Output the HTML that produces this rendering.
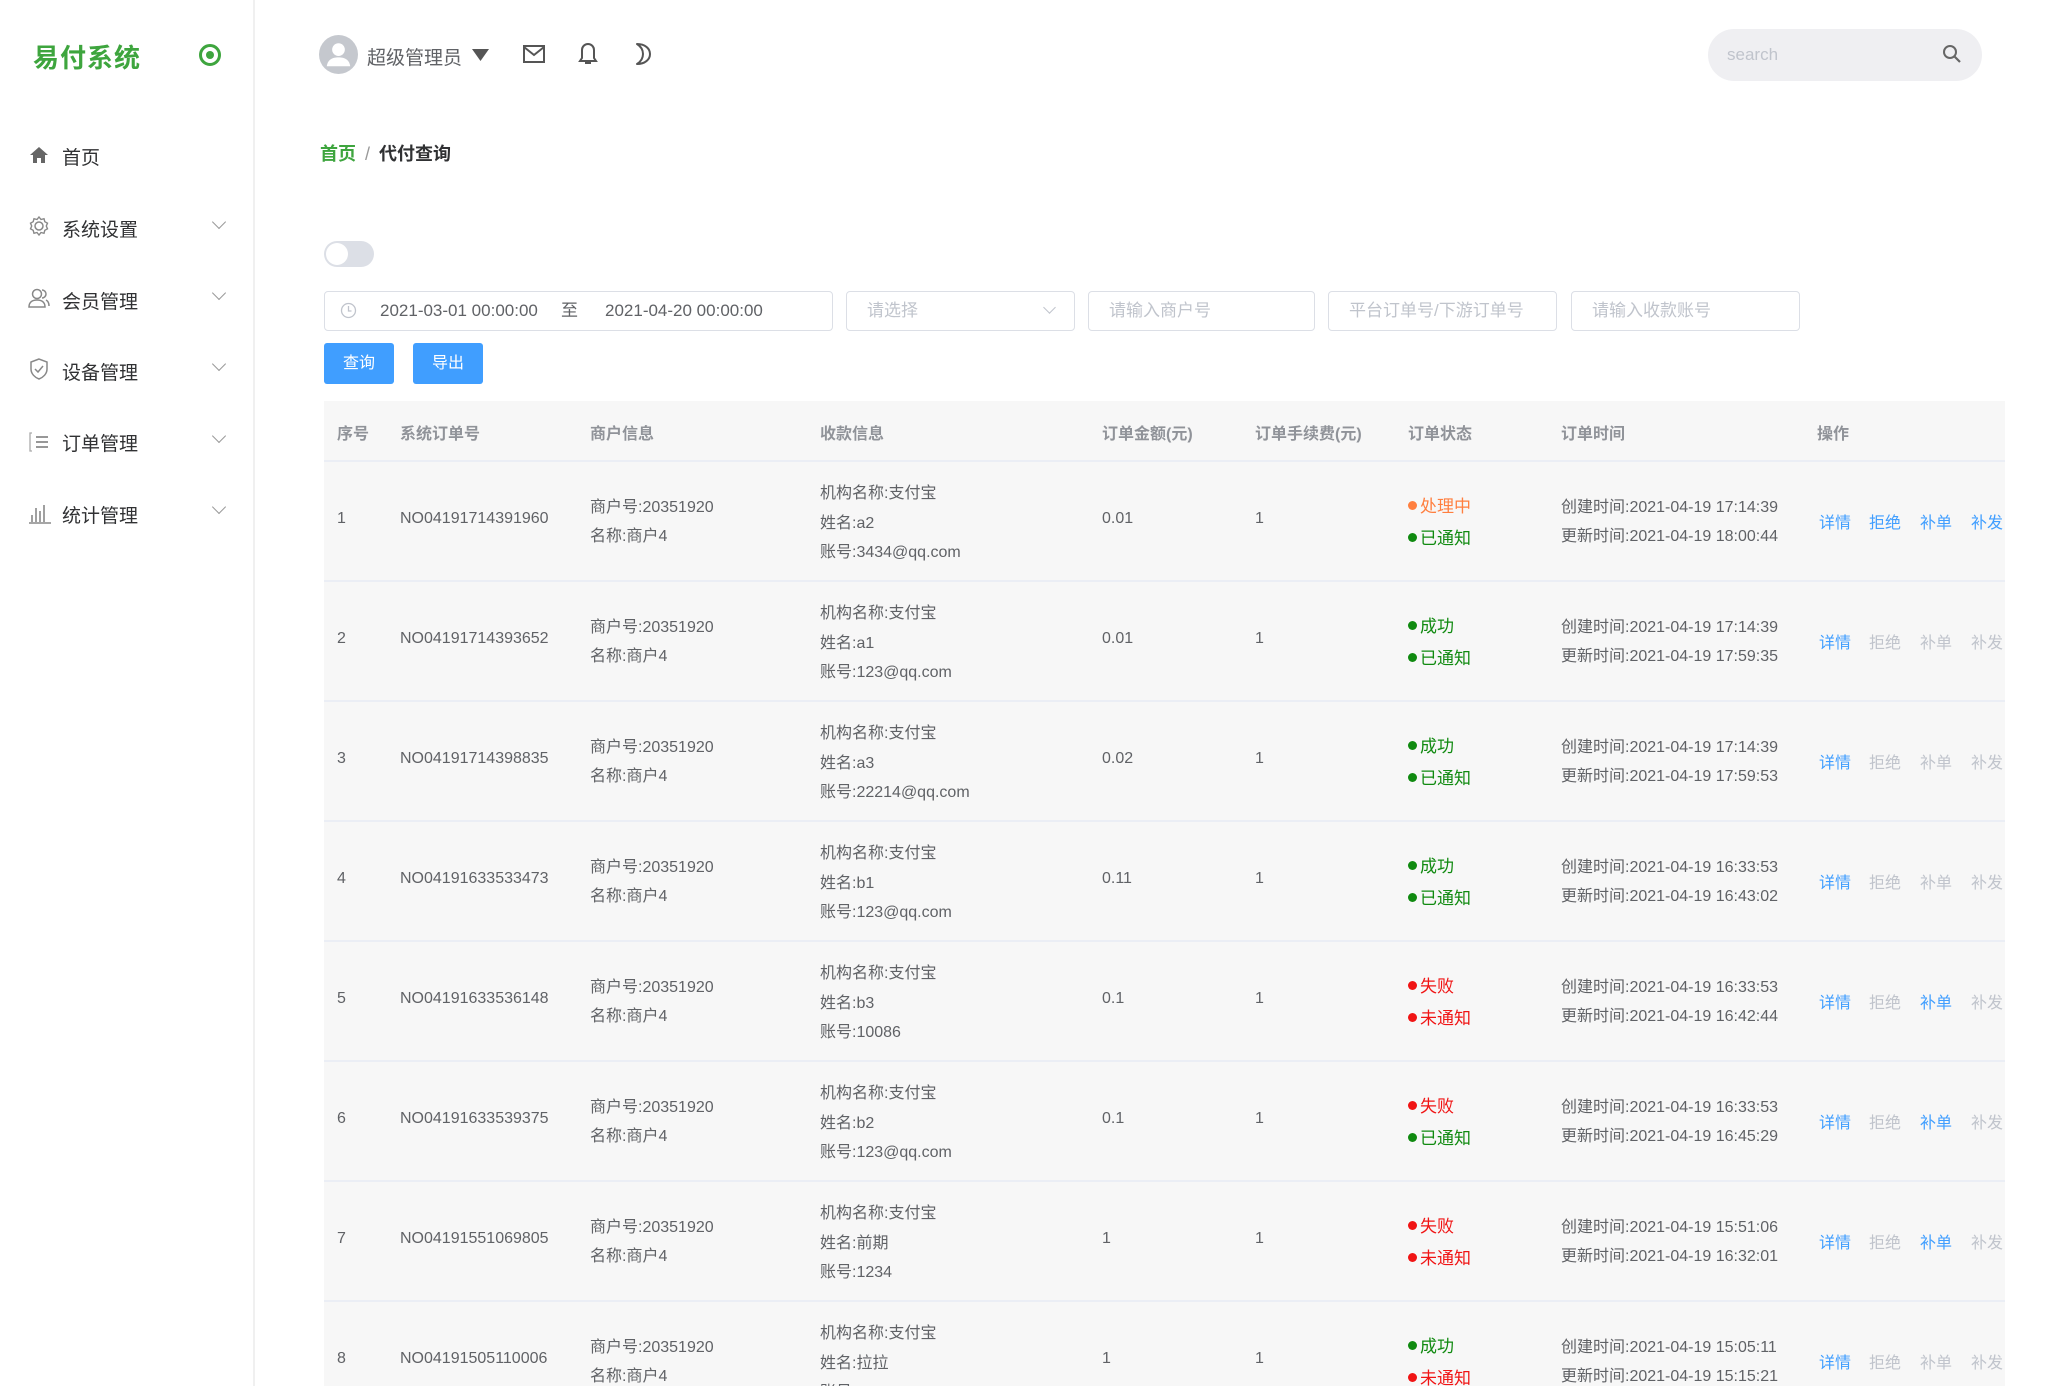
<!DOCTYPE html>
<html><head><meta charset="utf-8"><style>
*{margin:0;padding:0;box-sizing:border-box}
html,body{width:2048px;height:1386px;overflow:hidden}
body{background:#fff;font-family:"Liberation Sans","Noto Sans CJK SC",sans-serif;color:#606266;position:relative}
#wrap{position:absolute;left:0;top:0;width:2048px;height:1386px;overflow:hidden}
.a{position:absolute;white-space:nowrap}
.side{position:absolute;left:0;top:0;width:255px;height:1386px;border-right:2px solid #f0f0f0;background:#fff}
.logo{left:33px;top:38px;font-size:26px;font-weight:bold;color:#3ea53e;letter-spacing:1px}
.mi{left:62px;font-size:19px;color:#303133}
.chev{left:214px;width:10px;height:10px;border-right:1.5px solid #999;border-bottom:1.5px solid #999;transform:rotate(45deg)}
.inp{position:absolute;top:291px;height:40px;border:1.5px solid #dcdfe6;border-radius:4px;font-size:17px;color:#c0c4cc;padding-left:20px;line-height:37px}
.btn{position:absolute;top:343px;height:41px;background:#409eff;color:#fff;font-size:16px;border-radius:3px;text-align:center;line-height:41px}
.table{position:absolute;left:324px;top:401px;width:1681px;height:985px;background:#f7f7f7}
.th{position:absolute;top:420px;font-size:16px;font-weight:bold;color:#909399}
.row{position:absolute;left:324px;width:1681px;height:120px;border-top:2px solid #ebeef5}
.c{position:absolute;font-size:16px;color:#606266;white-space:nowrap;margin-top:-3px}
.s{font-size:17px}
.dot{display:inline-block;width:9px;height:9px;border-radius:50%;margin-right:3px;vertical-align:2px}
.o{color:#ff7f3f}.o .dot{background:#ff7f3f}
.g{color:#108a10}.g .dot{background:#108a10}
.r{color:#f01414}.r .dot{background:#f01414}
.lk{position:absolute;font-size:16px;color:#c0c4cc;margin-top:-4px}
.b{color:#409eff}
</style></head><body><div id="wrap">
<div class="side">
<div class="a logo">易付系统</div>
<svg class="a" style="left:198px;top:43px" width="24" height="24" viewBox="0 0 24 24"><circle cx="12" cy="12" r="9.5" fill="none" stroke="#3ea53e" stroke-width="3"/><circle cx="12" cy="12" r="4" fill="#3ea53e"/></svg>
<svg class="a" style="left:29px;top:145px" width="20" height="20" viewBox="0 0 20 20"><path d="M10 2L1 10h3v8h4v-5h4v5h4v-8h3z" fill="#666"/></svg>
<div class="a mi" style="top:143px">首页</div>
<svg class="a" style="left:28px;top:215px" width="22" height="22" viewBox="0 0 22 22"><circle cx="11" cy="11" r="4" fill="none" stroke="#888" stroke-width="1.5"/><path d="M11 2l2 2.5 3-.8.8 3 2.7 1.5-1.2 2.8 1.2 2.8-2.7 1.5-.8 3-3-.8L11 20l-2-2.5-3 .8-.8-3L2.5 13.8 3.7 11 2.5 8.2l2.7-1.5.8-3 3 .8z" fill="none" stroke="#888" stroke-width="1.4"/></svg>
<div class="a mi" style="top:215px">系统设置</div><div class="a chev" style="top:217px"></div>
<svg class="a" style="left:27px;top:287px" width="24" height="22" viewBox="0 0 24 22"><circle cx="10" cy="7" r="4.5" fill="none" stroke="#888" stroke-width="1.5"/><path d="M2 20c0-5 3.5-7 8-7s8 2 8 7z" fill="none" stroke="#888" stroke-width="1.5"/><path d="M15 3a4 4 0 010 8M19 13c2 1 3 3 3 6" fill="none" stroke="#888" stroke-width="1.5"/></svg>
<div class="a mi" style="top:287px">会员管理</div><div class="a chev" style="top:288px"></div>
<svg class="a" style="left:29px;top:358px" width="20" height="22" viewBox="0 0 20 22"><path d="M10 1L2 4v7c0 5 4 8.5 8 10 4-1.5 8-5 8-10V4z" fill="none" stroke="#888" stroke-width="1.5"/><path d="M6 11l3 3 5-6" fill="none" stroke="#888" stroke-width="1.5"/></svg>
<div class="a mi" style="top:358px">设备管理</div><div class="a chev" style="top:359px"></div>
<svg class="a" style="left:29px;top:432px" width="22" height="20" viewBox="0 0 22 20"><path d="M3 1H1v18h2" fill="none" stroke="#aaa" stroke-width="1.3"/><path d="M7 5h12M7 10h12M7 15h12" stroke="#777" stroke-width="1.6"/></svg>
<div class="a mi" style="top:429px">订单管理</div><div class="a chev" style="top:431px"></div>
<svg class="a" style="left:28px;top:502px" width="24" height="22" viewBox="0 0 24 22"><path d="M1 21h22M4 20v-7M8 20V6M12 20V9M16 20V3" stroke="#888" stroke-width="1.6"/></svg>
<div class="a mi" style="top:501px">统计管理</div><div class="a chev" style="top:502px"></div>
</div>

<svg class="a" style="left:319px;top:35px" width="39" height="39" viewBox="0 0 40 40"><circle cx="20" cy="20" r="20" fill="#c5c8ce"/><circle cx="20" cy="15" r="6.5" fill="#fff"/><path d="M8 32c1-7 6-9 12-9s11 2 12 9z" fill="#fff"/></svg>
<div class="a" style="left:367px;top:43px;font-size:19px;color:#606266">超级管理员</div>
<svg class="a" style="left:472px;top:49px" width="17" height="12"><path d="M0 0h17L8.5 12z" fill="#555"/></svg>
<svg class="a" style="left:523px;top:45px" width="22" height="18" viewBox="0 0 22 18"><rect x="1" y="1" width="20" height="16" fill="none" stroke="#555" stroke-width="2"/><path d="M1 2l10 8 10-8" fill="none" stroke="#555" stroke-width="2"/></svg>
<svg class="a" style="left:578px;top:42px" width="20" height="24" viewBox="0 0 20 24"><path d="M10 2a6 6 0 00-6 6v8l-2 3h16l-2-3V8a6 6 0 00-6-6z" fill="none" stroke="#555" stroke-width="2"/><path d="M7 21h6" stroke="#555" stroke-width="2"/></svg>
<svg class="a" style="left:634px;top:42px" width="20" height="24" viewBox="0 0 20 24"><path d="M3 2c8 0 13 4.5 13 10s-5 10-13 10c4-2.5 6-6 6-10S7 4.5 3 2z" fill="none" stroke="#555" stroke-width="2" stroke-linejoin="round"/></svg>
<div class="a" style="left:1708px;top:29px;width:274px;height:52px;border-radius:26px;background:#efeff2"></div>
<div class="a" style="left:1727px;top:45px;font-size:17px;color:#c0c4cc">search</div>
<svg class="a" style="left:1942px;top:44px" width="20" height="20" viewBox="0 0 20 20"><circle cx="8" cy="8" r="6" fill="none" stroke="#666" stroke-width="2"/><path d="M12.5 12.5L18 18" stroke="#666" stroke-width="2.2"/></svg>

<div class="a" style="left:320px;top:140px;font-size:18px;font-weight:bold;color:#3ea53e">首页 <span style="color:#999;font-weight:normal;margin:0 4px">/</span> <span style="color:#303133">代付查询</span></div>

<div class="a" style="left:324px;top:241px;width:50px;height:26px;border-radius:13px;background:#dcdfe6"><div style="position:absolute;left:2px;top:2px;width:22px;height:22px;border-radius:50%;background:#fff"></div></div>

<div class="inp" style="left:324px;width:509px;color:#606266;padding-left:0">
<svg class="a" style="left:15px;top:10px" width="17" height="17" viewBox="0 0 17 17"><circle cx="8.5" cy="8.5" r="7" fill="none" stroke="#c0c4cc" stroke-width="1.3"/><path d="M8.5 4v5h3" fill="none" stroke="#c0c4cc" stroke-width="1.3"/></svg>
<span class="a" style="left:55px;top:0">2021-03-01 00:00:00</span><span class="a" style="left:236px;top:0">至</span><span class="a" style="left:280px;top:0">2021-04-20 00:00:00</span></div>
<div class="inp" style="left:846px;width:229px">请选择<div class="a" style="right:20px;top:11px;width:9px;height:9px;border-right:1.3px solid #c0c4cc;border-bottom:1.3px solid #c0c4cc;transform:rotate(45deg)"></div></div>
<div class="inp" style="left:1088px;width:227px">请输入商户号</div>
<div class="inp" style="left:1328px;width:229px">平台订单号/下游订单号</div>
<div class="inp" style="left:1571px;width:229px">请输入收款账号</div>
<div class="btn" style="left:324px;width:70px">查询</div>
<div class="btn" style="left:413px;width:70px">导出</div>

<div class="table"></div>
<div class="th" style="left:337px">序号</div><div class="th" style="left:400px">系统订单号</div><div class="th" style="left:590px">商户信息</div><div class="th" style="left:820px">收款信息</div><div class="th" style="left:1102px">订单金额(元)</div><div class="th" style="left:1255px">订单手续费(元)</div><div class="th" style="left:1408px">订单状态</div><div class="th" style="left:1561px">订单时间</div><div class="th" style="left:1817px">操作</div>

<div class="row" style="top:460px"><div class="c" style="left:13px;top:51px">1</div><div class="c" style="left:76px;top:51px">NO04191714391960</div><div class="c" style="left:266px;top:34px">商户号:20351920</div><div class="c" style="left:266px;top:63px">名称:商户4</div><div class="c" style="left:496px;top:20px">机构名称:支付宝</div><div class="c" style="left:496px;top:50px">姓名:a2</div><div class="c" style="left:496px;top:79px">账号:3434@qq.com</div><div class="c" style="left:778px;top:51px">0.01</div><div class="c" style="left:931px;top:51px">1</div><div class="c s o" style="left:1084px;top:33px"><span class="dot"></span>处理中</div><div class="c s g" style="left:1084px;top:65px"><span class="dot"></span>已通知</div><div class="c" style="left:1237px;top:34px">创建时间:2021-04-19 17:14:39</div><div class="c" style="left:1237px;top:63px">更新时间:2021-04-19 18:00:44</div><div class="lk b" style="left:1495px;top:51px">详情</div><div class="lk b" style="left:1545px;top:51px">拒绝</div><div class="lk b" style="left:1596px;top:51px">补单</div><div class="lk b" style="left:1647px;top:51px">补发</div></div>

<div class="row" style="top:580px"><div class="c" style="left:13px;top:51px">2</div><div class="c" style="left:76px;top:51px">NO04191714393652</div><div class="c" style="left:266px;top:34px">商户号:20351920</div><div class="c" style="left:266px;top:63px">名称:商户4</div><div class="c" style="left:496px;top:20px">机构名称:支付宝</div><div class="c" style="left:496px;top:50px">姓名:a1</div><div class="c" style="left:496px;top:79px">账号:123@qq.com</div><div class="c" style="left:778px;top:51px">0.01</div><div class="c" style="left:931px;top:51px">1</div><div class="c s g" style="left:1084px;top:33px"><span class="dot"></span>成功</div><div class="c s g" style="left:1084px;top:65px"><span class="dot"></span>已通知</div><div class="c" style="left:1237px;top:34px">创建时间:2021-04-19 17:14:39</div><div class="c" style="left:1237px;top:63px">更新时间:2021-04-19 17:59:35</div><div class="lk b" style="left:1495px;top:51px">详情</div><div class="lk" style="left:1545px;top:51px">拒绝</div><div class="lk" style="left:1596px;top:51px">补单</div><div class="lk" style="left:1647px;top:51px">补发</div></div>

<div class="row" style="top:700px"><div class="c" style="left:13px;top:51px">3</div><div class="c" style="left:76px;top:51px">NO04191714398835</div><div class="c" style="left:266px;top:34px">商户号:20351920</div><div class="c" style="left:266px;top:63px">名称:商户4</div><div class="c" style="left:496px;top:20px">机构名称:支付宝</div><div class="c" style="left:496px;top:50px">姓名:a3</div><div class="c" style="left:496px;top:79px">账号:22214@qq.com</div><div class="c" style="left:778px;top:51px">0.02</div><div class="c" style="left:931px;top:51px">1</div><div class="c s g" style="left:1084px;top:33px"><span class="dot"></span>成功</div><div class="c s g" style="left:1084px;top:65px"><span class="dot"></span>已通知</div><div class="c" style="left:1237px;top:34px">创建时间:2021-04-19 17:14:39</div><div class="c" style="left:1237px;top:63px">更新时间:2021-04-19 17:59:53</div><div class="lk b" style="left:1495px;top:51px">详情</div><div class="lk" style="left:1545px;top:51px">拒绝</div><div class="lk" style="left:1596px;top:51px">补单</div><div class="lk" style="left:1647px;top:51px">补发</div></div>

<div class="row" style="top:820px"><div class="c" style="left:13px;top:51px">4</div><div class="c" style="left:76px;top:51px">NO04191633533473</div><div class="c" style="left:266px;top:34px">商户号:20351920</div><div class="c" style="left:266px;top:63px">名称:商户4</div><div class="c" style="left:496px;top:20px">机构名称:支付宝</div><div class="c" style="left:496px;top:50px">姓名:b1</div><div class="c" style="left:496px;top:79px">账号:123@qq.com</div><div class="c" style="left:778px;top:51px">0.11</div><div class="c" style="left:931px;top:51px">1</div><div class="c s g" style="left:1084px;top:33px"><span class="dot"></span>成功</div><div class="c s g" style="left:1084px;top:65px"><span class="dot"></span>已通知</div><div class="c" style="left:1237px;top:34px">创建时间:2021-04-19 16:33:53</div><div class="c" style="left:1237px;top:63px">更新时间:2021-04-19 16:43:02</div><div class="lk b" style="left:1495px;top:51px">详情</div><div class="lk" style="left:1545px;top:51px">拒绝</div><div class="lk" style="left:1596px;top:51px">补单</div><div class="lk" style="left:1647px;top:51px">补发</div></div>

<div class="row" style="top:940px"><div class="c" style="left:13px;top:51px">5</div><div class="c" style="left:76px;top:51px">NO04191633536148</div><div class="c" style="left:266px;top:34px">商户号:20351920</div><div class="c" style="left:266px;top:63px">名称:商户4</div><div class="c" style="left:496px;top:20px">机构名称:支付宝</div><div class="c" style="left:496px;top:50px">姓名:b3</div><div class="c" style="left:496px;top:79px">账号:10086</div><div class="c" style="left:778px;top:51px">0.1</div><div class="c" style="left:931px;top:51px">1</div><div class="c s r" style="left:1084px;top:33px"><span class="dot"></span>失败</div><div class="c s r" style="left:1084px;top:65px"><span class="dot"></span>未通知</div><div class="c" style="left:1237px;top:34px">创建时间:2021-04-19 16:33:53</div><div class="c" style="left:1237px;top:63px">更新时间:2021-04-19 16:42:44</div><div class="lk b" style="left:1495px;top:51px">详情</div><div class="lk" style="left:1545px;top:51px">拒绝</div><div class="lk b" style="left:1596px;top:51px">补单</div><div class="lk" style="left:1647px;top:51px">补发</div></div>

<div class="row" style="top:1060px"><div class="c" style="left:13px;top:51px">6</div><div class="c" style="left:76px;top:51px">NO04191633539375</div><div class="c" style="left:266px;top:34px">商户号:20351920</div><div class="c" style="left:266px;top:63px">名称:商户4</div><div class="c" style="left:496px;top:20px">机构名称:支付宝</div><div class="c" style="left:496px;top:50px">姓名:b2</div><div class="c" style="left:496px;top:79px">账号:123@qq.com</div><div class="c" style="left:778px;top:51px">0.1</div><div class="c" style="left:931px;top:51px">1</div><div class="c s r" style="left:1084px;top:33px"><span class="dot"></span>失败</div><div class="c s g" style="left:1084px;top:65px"><span class="dot"></span>已通知</div><div class="c" style="left:1237px;top:34px">创建时间:2021-04-19 16:33:53</div><div class="c" style="left:1237px;top:63px">更新时间:2021-04-19 16:45:29</div><div class="lk b" style="left:1495px;top:51px">详情</div><div class="lk" style="left:1545px;top:51px">拒绝</div><div class="lk b" style="left:1596px;top:51px">补单</div><div class="lk" style="left:1647px;top:51px">补发</div></div>

<div class="row" style="top:1180px"><div class="c" style="left:13px;top:51px">7</div><div class="c" style="left:76px;top:51px">NO04191551069805</div><div class="c" style="left:266px;top:34px">商户号:20351920</div><div class="c" style="left:266px;top:63px">名称:商户4</div><div class="c" style="left:496px;top:20px">机构名称:支付宝</div><div class="c" style="left:496px;top:50px">姓名:前期</div><div class="c" style="left:496px;top:79px">账号:1234</div><div class="c" style="left:778px;top:51px">1</div><div class="c" style="left:931px;top:51px">1</div><div class="c s r" style="left:1084px;top:33px"><span class="dot"></span>失败</div><div class="c s r" style="left:1084px;top:65px"><span class="dot"></span>未通知</div><div class="c" style="left:1237px;top:34px">创建时间:2021-04-19 15:51:06</div><div class="c" style="left:1237px;top:63px">更新时间:2021-04-19 16:32:01</div><div class="lk b" style="left:1495px;top:51px">详情</div><div class="lk" style="left:1545px;top:51px">拒绝</div><div class="lk b" style="left:1596px;top:51px">补单</div><div class="lk" style="left:1647px;top:51px">补发</div></div>

<div class="row" style="top:1300px;height:86px;overflow:hidden"><div class="c" style="left:13px;top:51px">8</div><div class="c" style="left:76px;top:51px">NO04191505110006</div><div class="c" style="left:266px;top:34px">商户号:20351920</div><div class="c" style="left:266px;top:63px">名称:商户4</div><div class="c" style="left:496px;top:20px">机构名称:支付宝</div><div class="c" style="left:496px;top:50px">姓名:拉拉</div><div class="c" style="left:496px;top:79px">账号:12345</div><div class="c" style="left:778px;top:51px">1</div><div class="c" style="left:931px;top:51px">1</div><div class="c s g" style="left:1084px;top:33px"><span class="dot"></span>成功</div><div class="c s r" style="left:1084px;top:65px"><span class="dot"></span>未通知</div><div class="c" style="left:1237px;top:34px">创建时间:2021-04-19 15:05:11</div><div class="c" style="left:1237px;top:63px">更新时间:2021-04-19 15:15:21</div><div class="lk b" style="left:1495px;top:51px">详情</div><div class="lk" style="left:1545px;top:51px">拒绝</div><div class="lk" style="left:1596px;top:51px">补单</div><div class="lk" style="left:1647px;top:51px">补发</div></div>
</div></body></html>
